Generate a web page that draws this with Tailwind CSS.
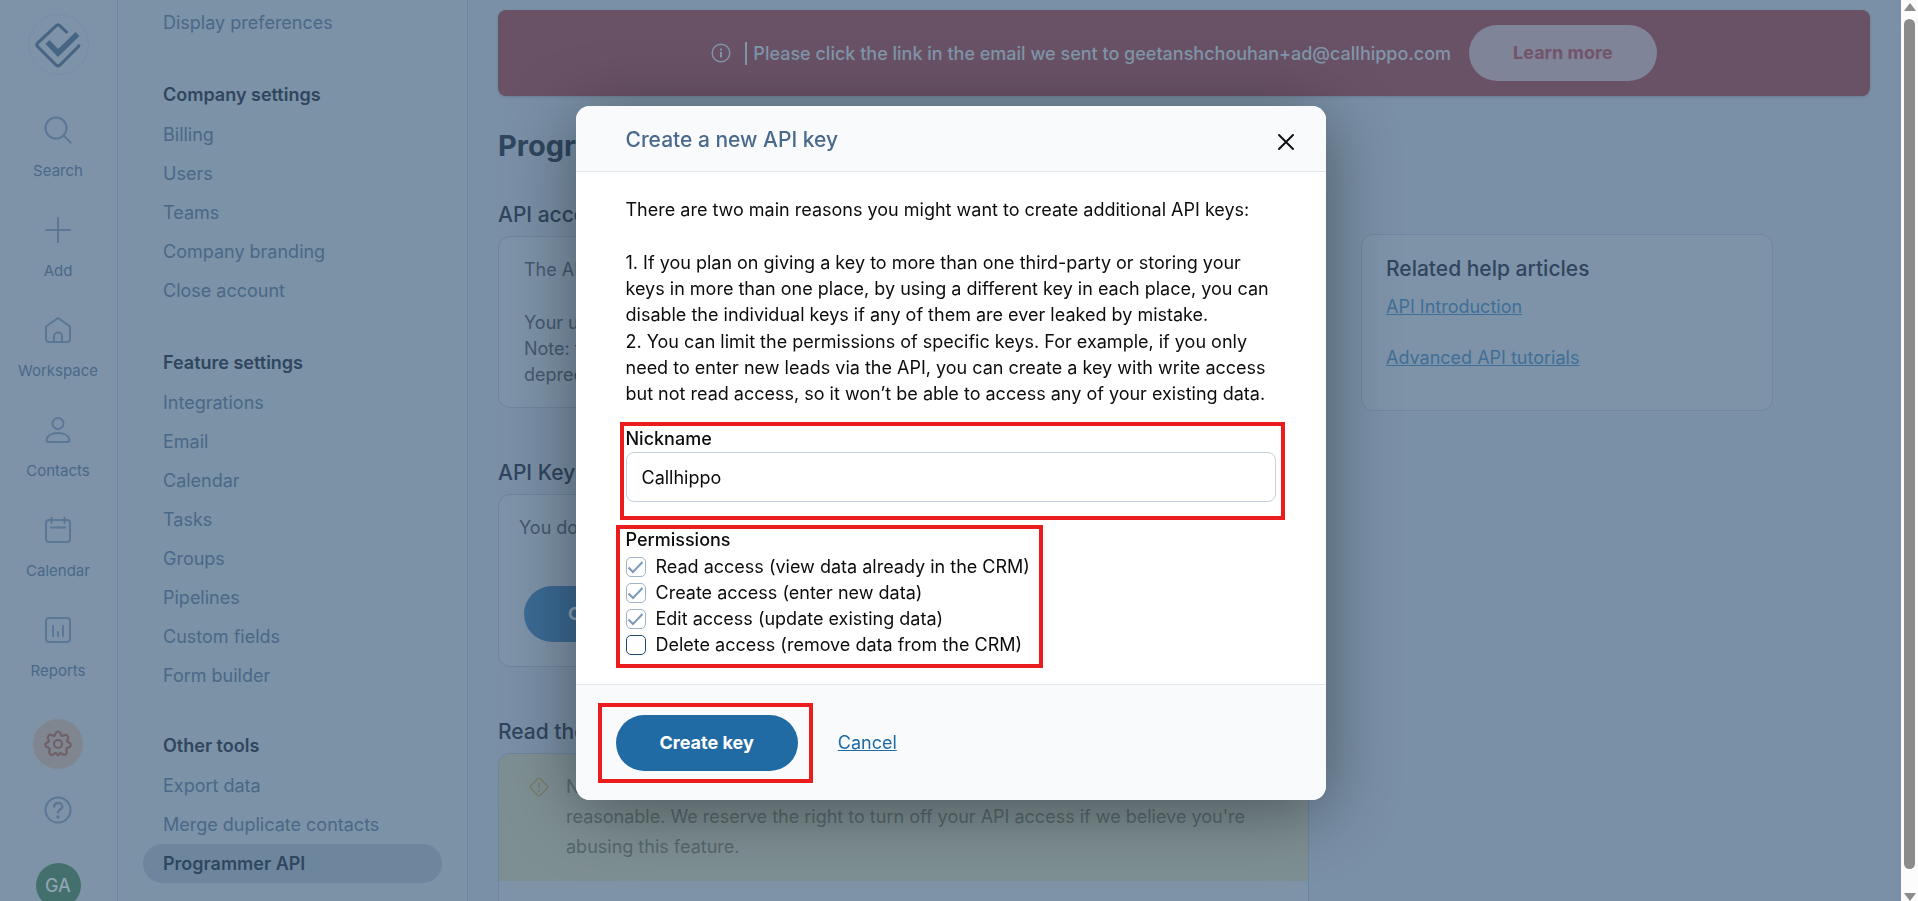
<!DOCTYPE html>
<html lang="en">
<head>
  <meta charset="UTF-8" />
  <meta name="viewport" content="width=device-width, initial-scale=1.0"/>
  <title>Programmer API</title>
  <script src="https://cdn.jsdelivr.net/npm/@tailwindcss/browser@4"></script>
</head>
<body class="h-screen overflow-hidden bg-[#7a90a6] font-['Inter','Liberation_Sans',sans-serif] text-lg leading-[26px] text-[#2f465e]">

<div class="flex h-screen overflow-hidden">

  <!-- Icon rail -->
  <nav class="flex w-[118px] shrink-0 flex-col items-center border-r border-[#6d85a0] bg-[#7e93a8] pt-[14px] pr-px text-[15px] leading-5 text-[#4a6888]">
    <a href="#" aria-label="Home" class="mb-[41px] flex size-[61px] shrink-0 items-center justify-center rounded-full border border-[#788ea5]">
      <svg class="size-[46px]" viewBox="0 0 46 46" fill="none" stroke="#466483">
        <path stroke-width="3" d="M32.500 11 25 3.800c-1.200-1.200-2.800-1.200-4 0L2.800 20.800c-1.200 1.200-1.200 2.800 0 4L21 43c1.200 1.200 2.800 1.200 4 0L43.200 24.800c.6-.6.8-1.400.7-2.500"/>
        <path stroke-width="5.500" d="m12.500 20 10.500 11L42.500 12"/>
      </svg>
    </a>
    <a href="#" class="flex h-[100px] shrink-0 flex-col items-center gap-[17px]">
      <svg class="size-[28px]" viewBox="0 0 28 28" fill="none" stroke="#5a7796" stroke-width="2" stroke-linecap="round"><circle cx="12" cy="12" r="10.500"/><path d="m20 20 6.500 6.500"/></svg>
      Search
    </a>
    <a href="#" class="flex h-[100px] shrink-0 flex-col items-center gap-[17px]">
      <svg class="size-[28px]" viewBox="0 0 28 28" fill="none" stroke="#5a7796" stroke-width="2" stroke-linecap="round"><path d="M14 2v24M2 14h24"/></svg>
      Add
    </a>
    <a href="#" class="flex h-[100px] shrink-0 flex-col items-center gap-[17px]">
      <svg class="size-[28px]" viewBox="0 0 28 28" fill="none" stroke="#5a7796" stroke-width="2" stroke-linejoin="round"><path d="M2 10.500 14 2l12 8.500V23a3 3 0 0 1-3 3H5a3 3 0 0 1-3-3zM10 26v-5.500a4 4 0 0 1 8 0V26"/></svg>
      Workspace
    </a>
    <a href="#" class="flex h-[100px] shrink-0 flex-col items-center gap-[17px]">
      <svg class="size-[28px]" viewBox="0 0 28 28" fill="none" stroke="#5a7796" stroke-width="2" stroke-linejoin="round"><circle cx="14" cy="7.500" r="5.500"/><path d="M2.500 24C3 19.500 8 17 14 17s11 2.500 11.500 7c0 1.200-.8 2-2 2h-19c-1.200 0-2-.8-2-2z"/></svg>
      Contacts
    </a>
    <a href="#" class="flex h-[100px] shrink-0 flex-col items-center gap-[17px]">
      <svg class="size-[28px]" viewBox="0 0 28 28" fill="none" stroke="#5a7796" stroke-width="2" stroke-linecap="round"><rect x="2" y="4" width="24" height="22" rx="3"/><path d="M7.500 1.500v5.500M20.500 1.500v5.500M7 11.500h14"/></svg>
      Calendar
    </a>
    <a href="#" class="flex h-[100px] shrink-0 flex-col items-center gap-[17px]">
      <svg class="size-[28px]" viewBox="0 0 28 28" fill="none" stroke="#5a7796" stroke-width="2" stroke-linecap="round"><rect x="2" y="2" width="24" height="24" rx="3"/><path d="M9 10v10M14 16v4M19 10v10"/></svg>
      Reports
    </a>
    <a href="#" aria-label="Settings" class="mt-[3px] flex size-[50px] shrink-0 items-center justify-center rounded-full bg-[#80868f]">
      <svg class="size-[28px]" viewBox="0 0 28 28" fill="none" stroke="#6f6066" stroke-width="2.200" stroke-linejoin="round"><circle cx="14" cy="14" r="4"/><path d="M11.600 3.300c.9-2.400 3.900-2.400 4.800 0l.7 1.700c.3.700 1 1 1.700.7l1.800-.6c2.300-.7 4.200 1.200 3.400 3.500l-.7 1.600c-.3.700 0 1.500.7 1.800l1.300.7c2 1.100 1.800 3.800-.3 4.600l-1.900.7c-.7.3-1 1-.8 1.700l.5 1.900c.5 2.300-1.900 4-3.900 2.800l-1.500-1.100c-.6-.4-1.400-.3-1.800.3l-.6.900c-.5.900-1.500.9-2 0l-.6-.9c-.4-.6-1.200-.7-1.800-.3l-1.500 1.100c-2 1.200-4.400-.5-3.900-2.800l.5-1.900c.2-.7-.1-1.400-.8-1.700L3 17.300c-2.100-.8-2.300-3.500-.3-4.600l1.300-.7c.7-.3 1-1.100.7-1.800L4 8.600C3.200 6.300 5.100 4.400 7.400 5.100l1.800.6c.7.300 1.400 0 1.700-.7z"/></svg>
    </a>
    <a href="#" aria-label="Help" class="mt-[27px]">
      <svg class="size-[28px]" viewBox="0 0 28 28" fill="none" stroke="#5a7796" stroke-width="2" stroke-linecap="round"><circle cx="14" cy="14" r="12.500"/><path stroke-width="2.300" d="M10 10.500c.3-2.200 2-3.500 4.200-3.500 2.300 0 4.100 1.500 4.100 3.500 0 3-4.300 3-4.300 6"/><circle cx="14" cy="21" r=".8" fill="#5a7796"/></svg>
    </a>
    <button type="button" class="mt-[39px] size-[45px] shrink-0 rounded-full bg-[#43706c] text-lg font-medium text-[#8fa5b4]">GA</button>
  </nav>

  <!-- Settings menu -->
  <aside class="w-[350px] shrink-0 border-r border-[#6d85a0] bg-[#7c92a6] px-[25px] pt-[3px] text-[#4a6888]">
    <ul>
      <li><a href="#" class="flex h-[39px] items-center px-5">Display preferences</a></li>
    </ul>
    <h2 class="mt-8 flex h-[41px] items-center px-5 font-semibold text-[#2f465e]">Company settings</h2>
    <ul>
      <li><a href="#" class="flex h-[39px] items-center px-5">Billing</a></li>
      <li><a href="#" class="flex h-[39px] items-center px-5">Users</a></li>
      <li><a href="#" class="flex h-[39px] items-center px-5">Teams</a></li>
      <li><a href="#" class="flex h-[39px] items-center px-5">Company branding</a></li>
      <li><a href="#" class="flex h-[39px] items-center px-5">Close account</a></li>
    </ul>
    <h2 class="mt-8 flex h-[41px] items-center px-5 font-semibold text-[#2f465e]">Feature settings</h2>
    <ul>
      <li><a href="#" class="flex h-[39px] items-center px-5">Integrations</a></li>
      <li><a href="#" class="flex h-[39px] items-center px-5">Email</a></li>
      <li><a href="#" class="flex h-[39px] items-center px-5">Calendar</a></li>
      <li><a href="#" class="flex h-[39px] items-center px-5">Tasks</a></li>
      <li><a href="#" class="flex h-[39px] items-center px-5">Groups</a></li>
      <li><a href="#" class="flex h-[39px] items-center px-5">Pipelines</a></li>
      <li><a href="#" class="flex h-[39px] items-center px-5">Custom fields</a></li>
      <li><a href="#" class="flex h-[39px] items-center px-5">Form builder</a></li>
    </ul>
    <h2 class="mt-[30px] flex h-[41px] items-center px-5 font-semibold text-[#2f465e]">Other tools</h2>
    <ul>
      <li><a href="#" class="flex h-[39px] items-center px-5">Export data</a></li>
      <li><a href="#" class="flex h-[39px] items-center px-5">Merge duplicate contacts</a></li>
      <li><a href="#" class="flex h-[39px] items-center rounded-full bg-[#6e869d] px-5 font-semibold text-[#2f465e]">Programmer API</a></li>
    </ul>
  </aside>

  <!-- Page content -->
  <main class="min-w-0 flex-1 overflow-hidden pt-2.5 pr-[31px] pl-[30px]">
    <div class="flex h-[86px] items-center justify-center rounded-lg bg-[#6a5266] font-medium text-[#8096aa] shadow">
      <svg class="mr-[14px] size-5" viewBox="0 0 20 20" fill="none" stroke="#8096aa" stroke-width="1.500"><circle cx="10" cy="10" r="8.800"/><path stroke-width="2" d="M10 9v5.500M10 5.500v2"/></svg>
      <p class="border-l-2 border-[#8096aa] pl-1.5 leading-[23px]">Please click the link in the email we sent to geetanshchouhan+ad@callhippo.com</p>
      <button type="button" class="ml-[18px] h-14 rounded-full bg-[#7f8499] px-11 font-bold text-[#73536a]">Learn more</button>
    </div>

    <h1 class="mt-[30px] text-[29px] leading-10 font-bold">Programmer API</h1>

    <div class="mt-9 flex max-w-[1275px] gap-[52px]">
      <div class="min-w-0 flex-1">
        <h2 class="text-[21px] leading-[26px] font-medium">API access</h2>
        <section class="mt-2 h-[172px] overflow-hidden rounded-xl border border-[#6d859d] bg-[#7e93a8] px-[25px] py-5 text-[#44596f]">
          <p>The API is available</p>
          <p class="mt-[27px]">Your username<br>Note: the keys<br>deprecated</p>
        </section>

        <h2 class="mt-[52px] text-[21px] leading-[26px] font-medium">API Keys</h2>
        <section class="mt-2 h-[173px] rounded-xl border border-[#6d859d] bg-[#7e93a8] px-5 py-5 text-[#44596f]">
          <p>You do not have any</p>
          <button type="button" class="mt-[45px] ml-[5px] h-14 rounded-full bg-[#3b6a94] px-11 font-bold text-[#8ea3b6]">Create key</button>
        </section>

        <h2 class="mt-[52px] text-[21px] leading-[26px] font-medium">Read the docs</h2>
        <section class="mt-2 h-[300px] overflow-hidden rounded-xl border border-[#6d859d] bg-[#7e93a8]">
          <div class="flex h-[127px] gap-[17px] bg-[#7e8f93] px-[30px] pt-[18px] leading-[30px] text-[#57686c]">
            <svg class="mt-[5px] size-5 shrink-0" viewBox="0 0 20 20" fill="none" stroke="#7a7d70" stroke-width="1.600"><rect x="3.300" y="3.300" width="13.400" height="13.400" rx="2" transform="rotate(45 10 10)"/><path stroke-width="2" d="M10 5.500v5.500M10 13v2"/></svg>
            <p>Note<br>reasonable. We reserve the right to turn off your API access if we believe you're<br>abusing this feature.</p>
          </div>
        </section>
      </div>

      <aside class="mt-8 h-[177px] w-[412px] shrink-0 rounded-xl border border-[#6f87a0] bg-[#7e93a8] px-6 py-[21px]">
        <h2 class="text-[21px] leading-[26px] font-medium">Related help articles</h2>
        <ul class="mt-3 flex flex-col gap-[25px] text-[#3f6f98]">
          <li><a href="#" class="underline">API Introduction</a></li>
          <li><a href="#" class="underline">Advanced API tutorials</a></li>
        </ul>
      </aside>
    </div>
  </main>

  <!-- Scrollbar -->
  <div class="flex w-[17px] shrink-0 flex-col items-center bg-[#fcfcfc] pt-[3px]">
    <svg class="h-2 w-3" viewBox="0 0 12 8" fill="#8b8b8b"><path d="M6 0 12 8H0z"/></svg>
    <div class="mt-2 mb-6 w-[11px] flex-1 rounded-full bg-[#8b8b8b]"></div>
    <svg class="h-2 w-3" viewBox="0 0 12 8" fill="#8b8b8b"><path d="M0 0h12L6 8z"/></svg>
  </div>
</div>

<!-- Create key dialog -->
<div class="fixed inset-0 flex items-start justify-center pt-[106px] pr-[17px]">
  <form role="dialog" aria-labelledby="dialogTitle" class="w-[750px] rounded-[14px] bg-white text-[#0c0c0c] shadow-[0_10px_70px_rgba(0,0,0,0.4)]">
    <header class="flex h-[66px] items-center justify-between rounded-t-[14px] border-b border-[#e2e6ea] bg-[#f9fafc] pt-0.5 pr-[31px] pl-[50px]">
      <h2 id="dialogTitle" class="text-[21px] font-medium text-[#4a6a8c]">Create a new API key</h2>
      <button type="button" aria-label="Close" class="pt-1">
        <svg class="size-[18px]" viewBox="0 0 18 18" fill="none" stroke="#111" stroke-width="2" stroke-linecap="round"><path d="m2 2 14 14M16 2 2 16"/></svg>
      </button>
    </header>

    <div class="px-[50px] pt-[25px] pb-[26px]">
      <p>There are two main reasons you might want to create additional API keys:</p>
      <div class="mt-[27px] flex flex-col gap-px">
        <p>1. If you plan on giving a key to more than one third-party or storing your<br>keys in more than one place, by using a different key in each place, you can<br>disable the individual keys if any of them are ever leaked by mistake.</p>
        <p>2. You can limit the permissions of specific keys. For example, if you only<br>need to enter new leads via the API, you can create a key with write access<br>but not read access, so it won’t be able to access any of your existing data.</p>
      </div>

      <div class="relative mt-[19px]">
        <div class="pointer-events-none absolute -top-1 -right-[9px] -bottom-[18px] -left-[6px] border-4 border-[#ea1c1e]"></div>
        <label for="nickname" class="block font-medium">Nickname</label>
        <input id="nickname" type="text" value="Callhippo" class="block h-[50px] w-full rounded-lg border border-[#c3d0de] bg-white px-[15px]">
      </div>

      <div class="relative mt-[25px] w-fit">
        <div class="pointer-events-none absolute -top-0.5 -right-[13px] -bottom-[10px] -left-[10px] border-4 border-[#ea1c1e]"></div>
        <fieldset>
          <legend class="mb-px block font-medium">Permissions</legend>
          <label class="flex items-center gap-2.5">
            <span class="relative size-5">
              <input type="checkbox" checked disabled class="peer block size-5 appearance-none rounded-[5px] border border-[#9fb3c9]">
              <svg class="absolute inset-0 hidden size-5 peer-checked:block" viewBox="0 0 20 20" fill="none" stroke="#7c99b8" stroke-width="2"><path d="m2.500 10.500 4.500 4.500L16.500 5"/></svg>
            </span>
            Read access (view data already in the CRM)
          </label>
          <label class="flex items-center gap-2.5">
            <span class="relative size-5">
              <input type="checkbox" checked disabled class="peer block size-5 appearance-none rounded-[5px] border border-[#9fb3c9]">
              <svg class="absolute inset-0 hidden size-5 peer-checked:block" viewBox="0 0 20 20" fill="none" stroke="#7c99b8" stroke-width="2"><path d="m2.500 10.500 4.500 4.500L16.500 5"/></svg>
            </span>
            Create access (enter new data)
          </label>
          <label class="flex items-center gap-2.5">
            <span class="relative size-5">
              <input type="checkbox" checked disabled class="peer block size-5 appearance-none rounded-[5px] border border-[#9fb3c9]">
              <svg class="absolute inset-0 hidden size-5 peer-checked:block" viewBox="0 0 20 20" fill="none" stroke="#7c99b8" stroke-width="2"><path d="m2.500 10.500 4.500 4.500L16.500 5"/></svg>
            </span>
            Edit access (update existing data)
          </label>
          <label class="flex items-center gap-2.5">
            <span class="relative size-5">
              <input type="checkbox" class="peer block size-5 appearance-none rounded-[5px] border border-[#1c4a75]">
              <svg class="absolute inset-0 hidden size-5 peer-checked:block" viewBox="0 0 20 20" fill="none" stroke="#1c4a75" stroke-width="2"><path d="m2.500 10.500 4.500 4.500L16.500 5"/></svg>
            </span>
            Delete access (remove data from the CRM)
          </label>
        </fieldset>
      </div>
    </div>

    <footer class="flex h-[116px] items-center gap-10 rounded-b-[14px] border-t border-[#e2e6ea] bg-[#f9fafc] px-10">
      <div class="relative">
        <div class="pointer-events-none absolute -top-3 -right-[15px] -bottom-3 -left-[18px] border-4 border-[#ea1c1e]"></div>
        <button type="submit" class="block h-14 rounded-full bg-[#216ba5] px-11 font-bold text-white">Create key</button>
      </div>
      <a href="#" class="text-[#216ba5] underline">Cancel</a>
    </footer>
  </form>
</div>

</body>
</html>
